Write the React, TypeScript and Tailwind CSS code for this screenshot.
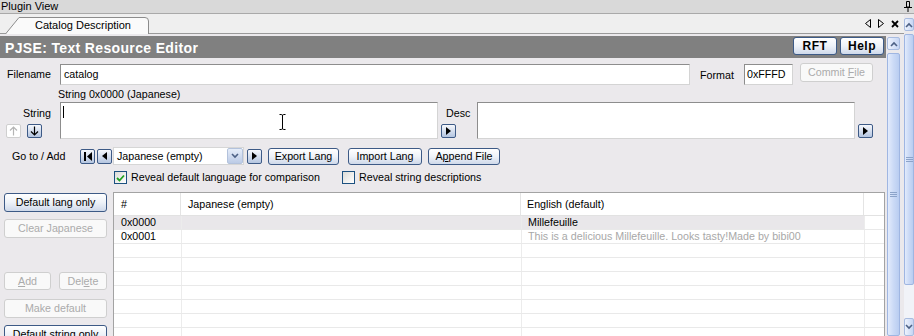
import type { ReactNode } from "react";
import clsx from "clsx";

const XpButton = ({ children, className, disabled, bold }: { children: ReactNode; className?: string; disabled?: boolean; bold?: boolean }) => (
  <div
    className={clsx(
      "flex shrink-0 items-center justify-center rounded-[3px] border leading-none whitespace-nowrap",
      disabled
        ? "border-[#cfcfcf] bg-[#f9f9f9] text-[#ababab]"
        : "border-[#3d5a86] bg-linear-to-b from-[#ffffff] via-[#eef2f8] to-[#cfd9ea] text-black",
      bold && "font-bold",
      className
    )}
  >
    {children}
  </div>
);

const IconBtn = ({ children, disabled, className }: { children: ReactNode; disabled?: boolean; className?: string }) => (
  <div
    className={clsx(
      "w-[15px] h-[14px] shrink-0 flex items-center justify-center rounded-[2px] border",
      disabled ? "border-[#cfcfcf] bg-white" : "border-[#3d5a86] bg-linear-to-b from-[#f6f8fc] to-[#b4c5e0]",
      className
    )}
  >
    {children}
  </div>
);

const TriRight = () => (
  <svg width="5" height="8" viewBox="0 0 5 8">
    <path d="M0 0 L5 4 L0 8 Z" fill="#000" />
  </svg>
);
const TriLeft = () => (
  <svg width="5" height="8" viewBox="0 0 5 8">
    <path d="M5 0 L0 4 L5 8 Z" fill="#000" />
  </svg>
);
const FirstIcon = () => (
  <svg width="8" height="9" viewBox="0 0 8 9">
    <rect x="0" y="0" width="2" height="9" fill="#000" />
    <path d="M8 0 L3 4.5 L8 9 Z" fill="#000" />
  </svg>
);
const ArrowV = ({ up, color }: { up?: boolean; color: string }) => (
  <svg width="9" height="10" viewBox="0 0 9 10">
    {up ? (
      <path d="M4.5 9.5 V1 M1 4.5 L4.5 1 L8 4.5" stroke={color} strokeWidth="1.2" fill="none" />
    ) : (
      <path d="M4.5 0.5 V9 M1 5.5 L4.5 9 L8 5.5" stroke={color} strokeWidth="1.2" fill="none" />
    )}
  </svg>
);

const Chevron = ({ up }: { up?: boolean }) => (
  <svg width="8" height="6" viewBox="0 0 8 6">
    <path d={up ? "M1 5 L4 2 L7 5" : "M1 1 L4 4 L7 1"} stroke="#4d6185" strokeWidth="1.6" fill="none" />
  </svg>
);

const Checkbox = ({ checked }: { checked?: boolean }) => (
  <div className="w-[13px] h-[13px] shrink-0 border border-[#1c5180] bg-linear-to-br from-[#dcdcd7] to-[#ffffff] flex items-center justify-center">
    {checked && (
      <svg width="9" height="8" viewBox="0 0 9 8">
        <path d="M1 4 L3.5 6.5 L8 1.5" stroke="#21a121" strokeWidth="1.8" fill="none" />
      </svg>
    )}
  </div>
);

const Grip = () => (
  <svg width="7" height="6" viewBox="0 0 7 6">
    <path d="M0 0.5 H7 M0 2.5 H7 M0 4.5 H7" stroke="#8ca3c9" strokeWidth="1" />
  </svg>
);

const Scrollbar = ({ outer }: { outer?: boolean }) => (
  <div className="flex flex-col h-full">
    <div className="h-[13px] shrink-0 flex items-center justify-center border border-[#a8bce0] rounded-[2px] bg-linear-to-r from-[#eef3fd] to-[#c6d6f4]">
      <Chevron up />
    </div>
    <div
      className={clsx(
        "mt-[3px] border border-[#9fb6e2] rounded-[2px] bg-linear-to-r from-[#e2ebfc] via-[#cbdaf6] to-[#b9cdf1] flex items-center justify-center",
        outer ? "h-[251px] shrink-0" : "flex-1"
      )}
    >
      <Grip />
    </div>
    {outer && (
      <>
        <div className="flex-1 bg-[#f1f3f8]" />
        <div className="h-[18px] shrink-0 flex items-center justify-center border border-[#a8bce0] rounded-[2px] bg-linear-to-r from-[#eef3fd] to-[#c6d6f4]">
          <Chevron />
        </div>
      </>
    )}
  </div>
);

const TextBox = ({ className, children }: { className?: string; children?: ReactNode }) => (
  <div className={clsx("shrink-0 bg-white border border-t-[#8d8d8d] border-l-[#8d8d8d] border-b-[#d4d4d4] border-r-[#d4d4d4]", className)}>
    {children}
  </div>
);

const rows = [
  { id: "0x0000", en: "Millefeuille", sel: true },
  { id: "0x0001", en: "This is a delicious Millefeuille. Looks tasty!Made by bibi00", sel: false },
  { id: "", en: "", sel: false },
  { id: "", en: "", sel: false },
  { id: "", en: "", sel: false },
  { id: "", en: "", sel: false },
  { id: "", en: "", sel: false },
  { id: "", en: "", sel: false },
  { id: "", en: "", sel: false },
];

export default function App() {
  return (
    <div className="w-[914px] h-[336px] overflow-hidden bg-[#ebe9ec] flex flex-col font-['Liberation_Sans',Arial,sans-serif] text-[10.7px] text-black leading-none">
      {/* title */}
      <div className="h-[14px] shrink-0 flex items-center justify-between bg-[#d9d9d9] border-b border-[#a9a9a9] pl-[1px] pr-[2px] text-[11px]">
        <span>Plugin View</span>
        <svg width="8" height="11" viewBox="0 0 8 11">
          <path d="M2.5 0.5 H5.5 V6 H2.5 Z M0 6.5 H8 M4 6.5 V11" stroke="#000" strokeWidth="1" fill="none" />
        </svg>
      </div>

      <div className="flex flex-1 min-h-0">
        <div className="w-[904px] flex flex-col">
          {/* tab strip */}
          <div className="h-[20px] shrink-0 flex items-end bg-[#efefef] border-b border-[#9a9a9a]">
            <div className="relative ml-[5px] w-[144px] h-[17px] mb-[-1px] flex items-center justify-center pl-[12px] text-[11px]">
              <svg className="absolute inset-0" width="144" height="17" viewBox="0 0 144 17">
                <path d="M0.5 17 L14 0.5 H140 Q143.5 0.5 143.5 4 V17" fill="#fafafa" stroke="#8c8c8c" />
              </svg>
              <span className="relative">Catalog Description</span>
            </div>
            <div className="flex-1" />
            <div className="flex items-center gap-[7px] mr-[5px] mb-[5px]">
              <svg width="6" height="9" viewBox="0 0 6 9">
                <path d="M5.5 0.5 L0.5 4.5 L5.5 8.5 Z" fill="none" stroke="#000" />
              </svg>
              <svg width="6" height="9" viewBox="0 0 6 9">
                <path d="M0.5 0.5 L5.5 4.5 L0.5 8.5 Z" fill="none" stroke="#000" />
              </svg>
              <svg width="8" height="8" viewBox="0 0 8 8">
                <path d="M1 1 L7 7 M7 1 L1 7" stroke="#000" strokeWidth="1.8" />
              </svg>
            </div>
          </div>

          {/* panel */}
          <div className="flex flex-1 min-h-0 pt-[2px]">
            <div className="w-[886px] flex flex-col">
              {/* header */}
              <div className="h-[22px] shrink-0 bg-[#808080] flex items-start justify-between pl-[5px] pr-[2px]">
                <span className="mt-[5px] text-white font-bold text-[14px] tracking-[0.35px]">PJSE: Text Resource Editor</span>
                <div className="flex gap-[3px] mt-[1px]">
                  <XpButton bold className="w-[44px] h-[18px] text-[12px] tracking-[0.5px]">RFT</XpButton>
                  <XpButton bold className="w-[44px] h-[18px] text-[12px] tracking-[0.5px]">Help</XpButton>
                </div>
              </div>

              {/* filename */}
              <div className="mt-[6px] h-[22px] shrink-0 flex items-start">
                <span className="w-[60px] pl-[7px] mt-[5px]">Filename</span>
                <TextBox className="w-[630px] h-[21px] flex items-center pl-[3px]">catalog</TextBox>
                <span className="ml-[10px] w-[44px] mt-[6px]">Format</span>
                <TextBox className="w-[49px] h-[21px] flex items-center pl-[2px]">0xFFFD</TextBox>
                <XpButton disabled className="ml-[7px] w-[73px] h-[19px] -mt-[1px]">
                  Commit&nbsp;<span className="underline">F</span>ile
                </XpButton>
              </div>

              {/* string label */}
              <div className="h-[16px] shrink-0 flex items-end pl-[58px] pb-[2px]">String 0x0000 (Japanese)</div>

              {/* string row */}
              <div className="h-[37px] shrink-0 flex">
                <div className="w-[60px] flex flex-col">
                  <span className="mt-[6px] pl-[23px]">String</span>
                  <div className="mt-auto mb-[1px] flex gap-[6px] pl-[6px]">
                    <IconBtn disabled>
                      <ArrowV up color="#b5b5b5" />
                    </IconBtn>
                    <IconBtn>
                      <ArrowV color="#000" />
                    </IconBtn>
                  </div>
                </div>
                <TextBox className="relative w-[378px] h-full">
                  <div className="ml-[2px] mt-[3px] w-px h-[12px] bg-black" />
                  <svg className="absolute left-[218px] top-[11px]" width="7" height="16" viewBox="0 0 7 16">
                    <path d="M0.5 0.5 H2.5 Q3.5 0.5 3.5 2 V14 Q3.5 15.5 2.5 15.5 H0.5 M6.5 0.5 H4.5 Q3.5 0.5 3.5 2 M3.5 14 Q3.5 15.5 4.5 15.5 H6.5" stroke="#000" fill="none" />
                  </svg>
                </TextBox>
                <div className="w-[39px] flex flex-col">
                  <span className="mt-[6px] pl-[8px]">Desc</span>
                  <IconBtn className="mt-auto mb-[1px] ml-[3px]">
                    <TriRight />
                  </IconBtn>
                </div>
                <TextBox className="w-[378px] h-full" />
                <IconBtn className="self-end mb-[1px] ml-[3px]">
                  <TriRight />
                </IconBtn>
              </div>

              {/* go to row */}
              <div className="mt-[8px] h-[18px] shrink-0 flex items-center">
                <span className="w-[80px] pl-[12px]">Go to / Add</span>
                <IconBtn className="h-[15px]">
                  <FirstIcon />
                </IconBtn>
                <IconBtn className="ml-[2px] h-[15px]">
                  <TriLeft />
                </IconBtn>
                <div className="ml-[1px] w-[131px] h-[18px] bg-white border border-[#d6d6d6] flex items-center">
                  <span className="flex-1 pl-[3px]">Japanese (empty)</span>
                  <div className="w-[16px] h-full border border-[#b3c2dc] rounded-[2px] bg-linear-to-b from-[#e6edf9] to-[#bccbe6] flex items-center justify-center">
                    <Chevron />
                  </div>
                </div>
                <IconBtn className="ml-[3px] h-[15px]">
                  <TriRight />
                </IconBtn>
                <XpButton className="ml-[6px] w-[71px] h-[17px]">Export Lang</XpButton>
                <XpButton className="ml-[9px] w-[74px] h-[17px]">Import Lang</XpButton>
                <XpButton className="ml-[6px] w-[72px] h-[17px]">
                  A<span className="underline">p</span>pend File
                </XpButton>
              </div>

              {/* checkboxes */}
              <div className="mt-[5px] h-[15px] shrink-0 flex items-center pl-[114px]">
                <div className="w-[228px] flex items-center gap-[4px]">
                  <Checkbox checked />
                  <span>Reveal default language for comparison</span>
                </div>
                <div className="flex items-center gap-[4px]">
                  <Checkbox />
                  <span>Reveal string descriptions</span>
                </div>
              </div>

              {/* bottom */}
              <div className="mt-[7px] flex flex-1 min-h-0">
                <div className="w-[113px] pl-[4px] pr-[6px] flex flex-col">
                  <XpButton className="mt-[1px] h-[19px]">Default lang only</XpButton>
                  <XpButton disabled className="mt-[7px] h-[19px]">Clear Japanese</XpButton>
                  <div className="mt-[34px] h-[18px] shrink-0 flex">
                    <XpButton disabled className="w-[47px] h-full">
                      <span className="underline">A</span>dd
                    </XpButton>
                    <XpButton disabled className="ml-auto w-[48px] h-full">
                      Del<span className="underline">e</span>te
                    </XpButton>
                  </div>
                  <XpButton disabled className="mt-[9px] h-[19px]">Make default</XpButton>
                  <XpButton className="mt-[7px] h-[19px]">Default string only</XpButton>
                </div>

                <div className="w-[772px] border-t border-l border-r border-[#a3a3a3] bg-white flex flex-col">
                  <div className="h-[23px] shrink-0 flex border-b border-[#e2e2e2]">
                    <div className="w-[67px] pl-[7px] flex items-center border-r border-[#e4e4e4]">#</div>
                    <div className="w-[340px] pl-[7px] flex items-center border-r border-[#e4e4e4]">Japanese (empty)</div>
                    <div className="w-[343px] pl-[6px] flex items-center border-r border-[#e4e4e4]">English (default)</div>
                    <div className="flex-1" />
                  </div>
                  {rows.map((r, i) => (
                    <div key={i} className="h-[14px] shrink-0 flex border-b border-[#e9e9e9]">
                      <div className={clsx("w-[67px] pl-[7px] flex items-center", r.sel && "bg-[#e9e7ea]")}>{r.id}</div>
                      <div className={clsx("w-[340px] border-l border-[#ececec]", r.sel && "bg-[#e9e7ea]")} />
                      <div
                        className={clsx(
                          "w-[343px] pl-[6px] flex items-center border-l border-[#ececec] whitespace-nowrap",
                          r.sel ? "bg-[#e9e7ea] text-black" : "text-[#a8a8a8]"
                        )}
                      >
                        {r.en}
                      </div>
                      <div className="flex-1 border-l border-[#ececec]" />
                    </div>
                  ))}
                </div>
              </div>
            </div>

            <div className="ml-[1px] w-[13px] mt-[1px]">
              <Scrollbar />
            </div>
          </div>
        </div>

        <div className="w-[10px] pt-[4px]">
          <Scrollbar outer />
        </div>
      </div>
    </div>
  );
}
